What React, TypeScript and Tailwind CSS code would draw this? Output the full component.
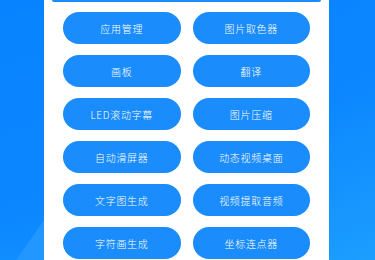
import React from "react";

const tools = [
  "应用管理",
  "图片取色器",
  "画板",
  "翻译",
  "LED滚动字幕",
  "图片压缩",
  "自动滑屏器",
  "动态视频桌面",
  "文字图生成",
  "视频提取音频",
  "字符画生成",
  "坐标连点器",
];

const App: React.FC = () => {
  return (
    <div className="relative h-[260px] w-[375px] overflow-hidden bg-[linear-gradient(160deg,#0883ff_0%,#0c87ff_55%,#1c9eff_100%)]">
      {/* light wedge in the bottom left corner */}
      <div className="absolute inset-0 bg-[#2197ff] [clip-path:polygon(44px_220px,44px_260px,16px_260px)]" />
      <div className="relative ml-[44px] h-full w-[285px] bg-white px-[19px]">
        <div className="-mx-[11px] h-[2px] rounded-b-sm bg-[#1a8cfc]" />
        <div className="mt-[10px] grid grid-cols-2 gap-x-[12px] gap-y-[11px]">
          {tools.map((name) => (
            <button
              key={name}
              className="flex h-[32px] items-center justify-center rounded-full bg-[#1a8cfc] text-[10px] font-light tracking-[0.7px] text-white"
              style={{ fontFamily: '"Noto Sans CJK SC", "Noto Sans", sans-serif' }}
            >
              {name}
            </button>
          ))}
        </div>
      </div>
    </div>
  );
};

export default App;
